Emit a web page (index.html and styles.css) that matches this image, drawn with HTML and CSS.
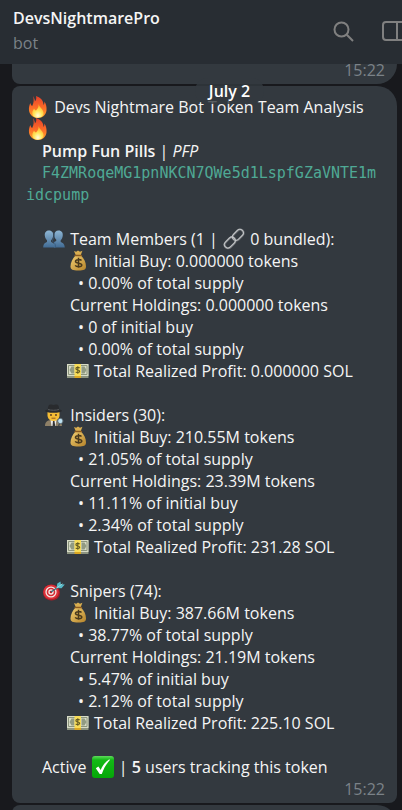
FILE: index.html
```html
<!DOCTYPE html>
<html lang="en">
<head>
<meta charset="utf-8">
<meta name="viewport" content="width=device-width, initial-scale=1">
<title>DevsNightmarePro</title>
<link rel="stylesheet" href="styles.css">
</head>
<body>
<svg class="defs" aria-hidden="true">
  <defs>
    <linearGradient id="flame" x1="0" y1="0" x2="0" y2="1"><stop offset="0" stop-color="#e8402a"/><stop offset=".5" stop-color="#fb6a28"/><stop offset="1" stop-color="#ffa62b"/></linearGradient>
    <radialGradient id="core" cx=".5" cy=".85" r=".7"><stop offset="0" stop-color="#fffde0"/><stop offset=".5" stop-color="#ffe75c"/><stop offset="1" stop-color="#ffb52e"/></radialGradient>
    <linearGradient id="bust" x1="0" y1="0" x2="0" y2="1"><stop offset="0" stop-color="#8eb6d4"/><stop offset="1" stop-color="#416b94"/></linearGradient>
    <linearGradient id="sack" x1="0" y1="0" x2="1" y2="1"><stop offset="0" stop-color="#f2cf72"/><stop offset="1" stop-color="#b5832a"/></linearGradient>
    <linearGradient id="tick" x1="0" y1="0" x2="0" y2="1"><stop offset="0" stop-color="#5fdc5c"/><stop offset=".18" stop-color="#13b916"/><stop offset="1" stop-color="#05a708"/></linearGradient>
    <symbol id="fire" viewBox="0 0 22 22">
      <path fill="url(#flame)" d="M6 0c1.500 2.500 2 4 1.800 5.500C9.500 4 9.500 2 9 0c5 1.500 7.500 5 7.500 9 .8-1 1-2 .8-3.500 2 2.500 2.500 5.500 2.200 9C19 19 15.500 22 11 22S2.500 19 2 14.500C1.700 11.500 2.300 9 3.500 7c.2 1.500.7 2.500 1.700 3C7 6.500 7 3.500 6 0z"/>
      <path fill="url(#core)" d="M11.500 8c.5 3 4.500 5 5 8.500.4 3.200-2 5.200-5.500 5.200s-6-2-5.700-5c.2-2 1.200-3 1.700-4.200.5 1.200 1 1.700 2 2 2-2 2.800-4 2.500-6.500z"/>
    </symbol>
    <symbol id="team" viewBox="0 0 22 22">
      <g fill="url(#bust)"><path d="M15.500 2.500c3.200 0 4.700 2.300 4.200 5.500-.2 2-1 3.300-2 4.200v1.800c1.800.8 3.800 1.500 4.100 5.500H11V14c1-.2 1.900-.7 2.300-1.200v-1c-1.300-1.300-2-2.800-2-4.800 0-2.500 1.700-4.500 4.200-4.500z"/><path d="M6 2.500c3 0 4.600 2.300 4.100 5.500-.2 2-1 3.300-2 4.200v1.800c1.800.8 3.900 1.500 4.100 5.500H.2c.2-4 2-4.700 3.800-5.500v-1.800C2.800 11 2 9.500 1.800 7.500 1.500 4.500 3.300 2.500 6 2.500z"/></g>
      <path d="M10.900 4.500c.7 2.500.2 5-1.300 7.500v1.500c1.800 1 2.800 2 2.900 6" fill="none" stroke="#39597a" stroke-width=".8"/>
    </symbol>
    <symbol id="bag" viewBox="0 0 22 22">
      <path fill="#d9ae50" d="M7 1l2.200.8L11 .6l2 1.100L15.400.8 13.800 5H8.700z"/>
      <path fill="url(#sack)" d="M8.500 5.500h5.500c3 3 5 6.800 5 11 0 3-2 4-7.700 4S3.500 19.500 3.500 16.500c0-4 2-8 5-11z"/>
      <path fill="none" stroke="#8c5b21" stroke-width="1.400" stroke-linecap="round" d="M8 5.500h6.500"/>
      <path fill="none" stroke="#49391d" stroke-width="1.500" d="M14.500 10.500c-1-1.200-6-1.400-6 .9 0 2.500 6.300 1 6.300 3.500 0 2.300-5.400 2.200-6.600.5M11.500 7.800v10"/>
    </symbol>
    <symbol id="cash" viewBox="0 0 22 22">
      <path fill="#8d9480" d="M0 4.500h21.500v13.500H0z"/><path fill="#d8dcc7" d="M0 4h21.500v12H0z"/>
      <path fill="none" stroke="#8c957d" d="M1.500 5.500h18.500v9H1.500z"/><path fill="#919b83" d="M4.500 6.500h3v7h-3l-2-3.500zM14.500 6.500h3l2 3.500-2 3.500h-3z"/>
      <path fill="#f7dc58" d="M7.500 4H14v12H7.500z"/><path fill="#dba723" d="M7.500 16H14v2H7.500z"/>
      <path fill="none" stroke="#655b22" stroke-width="1.100" d="M12.600 8c-1-1-3.700-.9-3.700.7 0 1.800 3.800.8 3.800 2.600 0 1.700-2.900 1.500-4 .5M10.800 6.300v7.400"/>
    </symbol>
    <symbol id="link" viewBox="0 0 22 22">
      <g fill="none" stroke-linecap="round"><g stroke="#6f7276" stroke-width="2.200"><rect x="8.800" y="3.600" width="12.500" height="7" rx="3.500" transform="rotate(-45 15 7)"/><rect x=".8" y="11.300" width="12.500" height="7" rx="3.500" transform="rotate(-45 7 14.800)"/></g><g stroke="#c4c7c9" stroke-width="1"><rect x="8.800" y="3.300" width="12.500" height="7" rx="3.500" transform="rotate(-45 15 7)"/><rect x=".8" y="11" width="12.500" height="7" rx="3.500" transform="rotate(-45 7 14.800)"/></g></g>
    </symbol>
    <symbol id="spy" viewBox="0 0 22 22">
      <path fill="#8e8067" d="M2 22c0-4 2-5.500 6-6h5c4 .5 5.500 2 6 6z"/><path fill="#eee" d="M7.500 15.500h6L12.500 22h-4z"/><path fill="#343434" d="M10 17h1.500l.7 5H9.500z"/>
      <path fill="#f5bd35" d="M4.500 6h12v6c-.5 3.300-3 5-6 5s-5.500-1.700-6-5z"/>
      <path fill="#292b2e" d="M4.800 5.500C5 1.500 6 .3 8.200.5l2.300.5 2.300-.5c2.300-.2 3.200 1 3.400 5 1.600.1 2.600.5 2.600 1.300 0 1.400-3.800 2-8.300 2s-8.300-.6-8.300-2c0-.8 1-1.200 2.600-1.300z"/>
      <path fill="none" stroke="#575a5c" d="M5 5.500c3 1 8 1 11 0"/>
      <g fill="#4c3423"><circle cx="8" cy="11" r=".9"/><circle cx="13" cy="11" r=".9"/></g><path stroke="#925b22" fill="none" d="M8.500 14.200h4"/>
      <circle cx="17.300" cy="17" r="2.700" fill="#bde1f1" stroke="#59666d"/><path stroke="#494d50" stroke-width="1.500" d="M16.500 20l-1 2"/>
    </symbol>
    <symbol id="target" viewBox="0 0 22 22">
      <ellipse cx="8.500" cy="12.500" rx="8.500" ry="8" fill="#a91d27"/><ellipse cx="8" cy="12" rx="7.700" ry="7.300" fill="#db3038"/><circle cx="8" cy="12" r="5.600" fill="#f6e9e5"/><circle cx="8" cy="12" r="4.300" fill="#d52b34"/><circle cx="8" cy="12" r="2.700" fill="#f6e9e5"/><circle cx="8" cy="12" r="1.300" fill="#c71e2a"/>
      <path d="M8 12L16 6.500" stroke="#376d79" stroke-width="1.400"/><path fill="#57b9c7" d="M13.500 8l.8-4.500L17.500 1.500l.3 2.700 4 .3-3.300 3.700z"/><path d="M13.500 8l6-4.200" stroke="#a6e1e3" stroke-width=".8"/>
    </symbol>
    <symbol id="check" viewBox="0 0 22 22"><rect width="22" height="22" rx="3" fill="url(#tick)"/><path fill="#fff" d="M3.800 12.200l2.600-1.700 2.300 3.600C10.500 9.500 13 6.200 17.300 3.300l.6.8C14 8.500 11.700 12.500 9.800 18H7.700z"/></symbol>
  </defs>
</svg>
<header class="topbar">
  <div class="peer"><h1>DevsNightmarePro</h1><p>bot</p></div>
  <nav class="tools">
    <button type="button" aria-label="Search"><svg viewBox="0 0 22 22"><circle cx="8.500" cy="8.500" r="7"/><path d="M13.800 13.800l6.200 6.200"/></svg></button>
    <button type="button" aria-label="Toggle side panel"><svg viewBox="0 0 22 22"><rect x="1" y="1" width="24" height="18" rx="3"/><path d="M15 1v18"/></svg></button>
  </nav>
</header>
<main class="chat">
  <article class="bubble previous"><time>15:22</time></article>
  <div class="date"><span>July 2</span></div>
  <article class="bubble message">
    <p class="title"><svg class="emoji wide"><use href="#fire"/></svg> Devs Nightmare Bot Token Team Analysis <svg class="emoji wide"><use href="#fire"/></svg></p>
    <p class="indent"><b>Pump Fun Pills</b> | <i>PFP</i></p>
    <p class="address"><code>F4ZMRoqeMG1pnNKCN7QWe5d1LspfGZaVNTE1midcpump</code></p>
    <section>
      <h2><svg class="emoji spaced"><use href="#team"/></svg> Team Members (1 | <svg class="emoji spaced"><use href="#link"/></svg> 0 bundled):</h2>
      <p class="buy"><svg class="emoji"><use href="#bag"/></svg>Initial Buy: 0.000000 tokens</p>
      <p class="point">• 0.00% of total supply</p>
      <p class="holdings">Current Holdings: 0.000000 tokens</p>
      <p class="point">• 0 of initial buy</p>
      <p class="point">• 0.00% of total supply</p>
      <p class="profit"><svg class="emoji"><use href="#cash"/></svg>Total Realized Profit: 0.000000 SOL</p>
    </section>
    <section>
      <h2><svg class="emoji spaced"><use href="#spy"/></svg> Insiders (30):</h2>
      <p class="buy"><svg class="emoji"><use href="#bag"/></svg>Initial Buy: 210.55M tokens</p>
      <p class="point">• 21.05% of total supply</p>
      <p class="holdings">Current Holdings: 23.39M tokens</p>
      <p class="point">• 11.11% of initial buy</p>
      <p class="point">• 2.34% of total supply</p>
      <p class="profit"><svg class="emoji"><use href="#cash"/></svg>Total Realized Profit: 231.28 SOL</p>
    </section>
    <section>
      <h2><svg class="emoji spaced"><use href="#target"/></svg> Snipers (74):</h2>
      <p class="buy"><svg class="emoji"><use href="#bag"/></svg>Initial Buy: 387.66M tokens</p>
      <p class="point">• 38.77% of total supply</p>
      <p class="holdings">Current Holdings: 21.19M tokens</p>
      <p class="point">• 5.47% of initial buy</p>
      <p class="point">• 2.12% of total supply</p>
      <p class="profit"><svg class="emoji"><use href="#cash"/></svg>Total Realized Profit: 225.10 SOL</p>
    </section>
    <p class="indent active">Active <svg class="emoji spaced"><use href="#check"/></svg> | <b>5</b> users tracking this token</p>
    <time>15:22</time>
  </article>
  <article class="bubble next"></article>
</main>
</body>
</html>
```
FILE: styles.css
```css
* { box-sizing: border-box; margin: 0; }
body {
  height: 100vh;
  display: flex;
  flex-direction: column;
  overflow: hidden;
  background: #18191d;
  color: #f5f5f5;
  font: 16px/22px "Open Sans", "Noto Sans", sans-serif;
}
.defs { position: absolute; width: 0; height: 0; }
.topbar {
  flex: none;
  display: flex;
  justify-content: space-between;
  height: 64px;
  padding: 7px 0 0 13px;
  background: #282d33;
}
.topbar h1 { font-size: 16px; font-weight: 600; line-height: 22px; }
.topbar p { color: #7b8288; line-height: 28px; }
.tools { display: flex; gap: 27px; padding-top: 14px; overflow: hidden; }
.tools button { width: 22px; height: 22px; padding: 0; border: 0; background: none; flex: none; }
.tools button:last-child { margin-right: -2px; }
.tools svg { display: block; width: 22px; height: 22px; fill: none; stroke: #808080; stroke-width: 2; }
.chat { flex: 1; min-height: 0; overflow: hidden; padding: 0 5px 0 12px; }
.bubble { background: #33393f; border-radius: 8px 20px 8px 8px; padding: 10px 14px 3px; }
.bubble time { display: block; text-align: right; color: #7b8288; line-height: 22px; margin-right: -2px; }
.previous { height: 20px; padding-top: 0; border-radius: 0 0 20px 8px; display: flex; align-items: flex-end; justify-content: flex-end; }
.date { position: relative; z-index: 1; height: 2px; display: flex; justify-content: center; padding-left: 50px; }
.date span {
  position: absolute;
  top: -6px;
  padding: 2px 14px;
  border-radius: 13px;
  background: rgba(51, 57, 64, .8);
  color: #fff;
  font-weight: 600;
}
.message b { font-weight: 600; }
.emoji { width: 22px; height: 22px; vertical-align: top; }
.wide { width: 24px; }
.spaced { margin: 0 1px; }
.indent { padding-left: 16px; }
.address { text-indent: 16px; overflow-wrap: anywhere; color: #4fa995; }
.address code { font: 15px/22px "DejaVu Sans Mono", monospace; vertical-align: top; }
.message section { margin-top: 22px; }
h2 { font: inherit; padding-left: 16px; }
.buy { padding-left: 41px; }
.buy .emoji { margin-right: 5px; }
.holdings { padding-left: 44px; }
.point { padding-left: 52px; }
.profit { padding-left: 41px; }
.profit .emoji { margin-right: 5px; }
.active { margin-top: 22px; }
.next { margin-top: 2px; height: 60px; }
```
